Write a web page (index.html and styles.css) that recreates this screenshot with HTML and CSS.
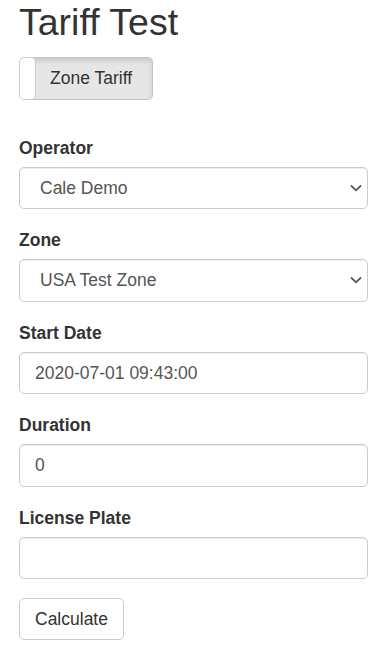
FILE: index.html
```html
<!DOCTYPE html>
<html>
<head>
<meta charset="utf-8">
<title>Tariff Test</title>
<link rel="stylesheet" href="styles.css">
</head>
<body>
<div class="container">
  <h2 class="title">Tariff Test</h2>
  <div class="btn-group">
    <span class="seg-empty"></span>
    <span class="seg-active">Zone Tariff</span>
  </div>
  <form class="tariff-form">
    <div class="form-group">
      <label class="label">Operator</label>
      <div class="select-wrap">
        <select class="form-control select"><option>Cale Demo</option></select>
        <svg class="chevron" width="12" height="8" viewBox="0 0 12 8"><path d="M1 1.5 L6 6.3 L11 1.5" fill="none" stroke="#555" stroke-width="1.8"/></svg>
      </div>
    </div>
    <div class="form-group">
      <label class="label">Zone</label>
      <div class="select-wrap">
        <select class="form-control select"><option>USA Test Zone</option></select>
        <svg class="chevron" width="12" height="8" viewBox="0 0 12 8"><path d="M1 1.5 L6 6.3 L11 1.5" fill="none" stroke="#555" stroke-width="1.8"/></svg>
      </div>
    </div>
    <div class="form-group">
      <label class="label">Start Date</label>
      <input class="form-control" type="text" value="2020-07-01 09:43:00">
    </div>
    <div class="form-group">
      <label class="label">Duration</label>
      <input class="form-control" type="text" value="0">
    </div>
    <div class="form-group">
      <label class="label">License Plate</label>
      <input class="form-control" type="text" value="">
    </div>
    <button type="button" class="btn">Calculate</button>
  </form>
</div>
</body>
</html>
```

FILE: styles.css
```css
* { box-sizing: border-box; }
html, body { margin: 0; padding: 0; background: #fff; }
body {
  font-family: "Liberation Sans", Arial, sans-serif;
  font-size: 17.5px;
  line-height: 1.42857;
  color: #333;
}
.container { padding: 0 18px 0 19px; }
.title {
  font-size: 37.5px;
  font-weight: 500;
  line-height: 1.1;
  margin: 2px 0 14px;
}
.btn-group { display: inline-flex; height: 42.5px; }
.seg-empty {
  width: 17px;
  background: #fff;
  border: 1px solid #ccc;
  border-radius: 5px;
  margin-right: -5px;
  position: relative;
  z-index: 1;
}
.seg-active {
  display: block;
  padding: 7.5px 20px 7.5px 19px;
  background: #e6e6e6;
  border: 1px solid #c4c4c4;
  border-left: none;
  border-radius: 0 5px 5px 0;
  box-shadow: inset 0 3px 5px rgba(0,0,0,.125);
  color: #333;
}
.tariff-form { margin-top: 29px; }
.form-group { margin-bottom: 18.75px; }
.label {
  display: block;
  font-weight: bold;
  margin-bottom: 6.25px;
  line-height: 25px;
}
.form-control {
  display: block;
  width: 100%;
  height: 42.5px;
  padding: 7.5px 15px;
  font-family: inherit;
  font-size: 17.5px;
  line-height: 1.42857;
  color: #555;
  background: #fff;
  border: 1px solid #ccc;
  border-radius: 5px;
  box-shadow: inset 0 1px 1px rgba(0,0,0,.075);
  margin: 0;
}
.select-wrap { position: relative; }
.select {
  -webkit-appearance: none;
  appearance: none;
  padding: 7.5px 30px 7.5px 20px;
}
.chevron {
  position: absolute;
  right: 6px;
  top: 17px;
  pointer-events: none;
}
.btn {
  display: inline-block;
  height: 42px;
  padding: 7.5px 15px;
  font-family: inherit;
  font-size: 17.5px;
  line-height: 1.42857;
  color: #333;
  background: #fff;
  border: 1px solid #ccc;
  border-radius: 5px;
  margin: 0;
}
```
